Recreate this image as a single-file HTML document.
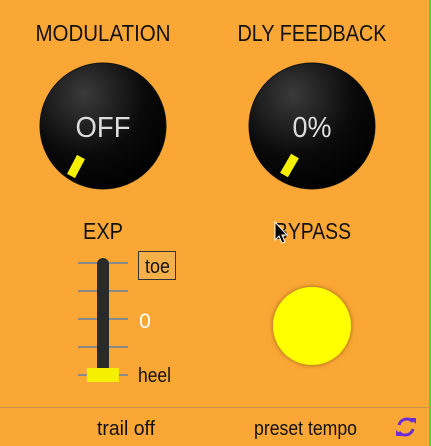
<!DOCTYPE html>
<html><head><style>html,body{margin:0;padding:0;background:#FBA735;}svg{display:block}</style></head>
<body>
<svg width="431" height="446" viewBox="0 0 431 446" xmlns="http://www.w3.org/2000/svg" font-family="'Liberation Sans Narrow','Liberation Sans',sans-serif">
<defs>
<radialGradient id="k" cx="0.35" cy="0.25" r="0.8">
<stop offset="0" stop-color="#3a3a3a"/><stop offset="0.6" stop-color="#0a0a0a"/><stop offset="1" stop-color="#000"/>
</radialGradient>
<filter id="s" x="-30%" y="-30%" width="160%" height="160%"><feDropShadow dx="0" dy="0" stdDeviation="2.5" flood-color="#7a4a00" flood-opacity="0.8"/></filter>
</defs>
<rect width="431" height="446" fill="#FBA735"/>
<rect x="429" y="0" width="2" height="446" fill="#3be03b"/>
<text x="103" y="41" font-size="23" text-anchor="middle" textLength="135" lengthAdjust="spacingAndGlyphs" fill="#111">MODULATION</text>
<text x="312" y="41" font-size="23" text-anchor="middle" textLength="149" lengthAdjust="spacingAndGlyphs" fill="#111">DLY FEEDBACK</text>
<circle cx="103" cy="126" r="63" fill="url(#k)" stroke="#111"/>
<circle cx="312" cy="126" r="63" fill="url(#k)" stroke="#111"/>
<text x="103" y="137" font-family="'Liberation Sans',sans-serif" font-size="29" text-anchor="middle" textLength="55" lengthAdjust="spacingAndGlyphs" fill="#ddd">OFF</text>
<text x="312" y="137" font-family="'Liberation Sans',sans-serif" font-size="29" text-anchor="middle" textLength="39" lengthAdjust="spacingAndGlyphs" fill="#ddd">0%</text>
<line x1="81" y1="157" x2="71" y2="176" stroke="#f5f000" stroke-width="9"/>
<line x1="295" y1="156" x2="284" y2="175" stroke="#f5f000" stroke-width="9"/>
<text x="103" y="239" font-size="23" text-anchor="middle" textLength="40" lengthAdjust="spacingAndGlyphs" fill="#111">EXP</text>
<text x="313" y="239" font-size="23" text-anchor="middle" textLength="76" lengthAdjust="spacingAndGlyphs" fill="#111">BYPASS</text>
<g stroke="#8a8a8a" stroke-width="2">
<line x1="78" y1="263" x2="128" y2="263"/><line x1="78" y1="291" x2="128" y2="291"/><line x1="78" y1="319" x2="128" y2="319"/><line x1="78" y1="347" x2="128" y2="347"/><line x1="78" y1="375" x2="128" y2="375"/>
</g>
<rect x="97" y="258" width="12" height="115" rx="6" fill="#2a2a2a"/>
<rect x="87" y="368" width="32" height="14" fill="#f5f000"/>
<rect x="138.5" y="251.5" width="37" height="28" fill="#F5B04a" stroke="#333"/>
<text x="157.5" y="273" font-size="20" text-anchor="middle" textLength="25" lengthAdjust="spacingAndGlyphs" fill="#111">toe</text>
<text x="145" y="328" font-family="'Liberation Sans',sans-serif" font-size="21" text-anchor="middle" fill="#fff">0</text>
<text x="138" y="382" font-size="20" textLength="33" lengthAdjust="spacingAndGlyphs" fill="#111">heel</text>
<circle cx="312" cy="326" r="39" fill="#ffff00" filter="url(#s)"/>
<line x1="0" y1="407.5" x2="431" y2="407.5" stroke="#c9934a"/>
<text x="97" y="435" font-size="20" textLength="58" lengthAdjust="spacingAndGlyphs" fill="#111">trail off</text>
<text x="254" y="435" font-size="20" textLength="103" lengthAdjust="spacingAndGlyphs" fill="#111">preset tempo</text>
<g fill="none" stroke="#6a2bd8" stroke-width="3">
<path d="M399 425 a8 8 0 0 1 14 -3"/><path d="M413 429 a8 8 0 0 1 -14 3"/>
</g>
<path d="M410 418 l6 0 l0 6 z" fill="#6a2bd8"/><path d="M402 436 l-6 0 l0 -6 z" fill="#6a2bd8"/>
<path d="M275 222 l0 18 l4 -4 l3 7 l3 -1 l-3 -7 l5 0 z" fill="#000" stroke="#fff" stroke-width="1"/>
</svg>
</body></html>
